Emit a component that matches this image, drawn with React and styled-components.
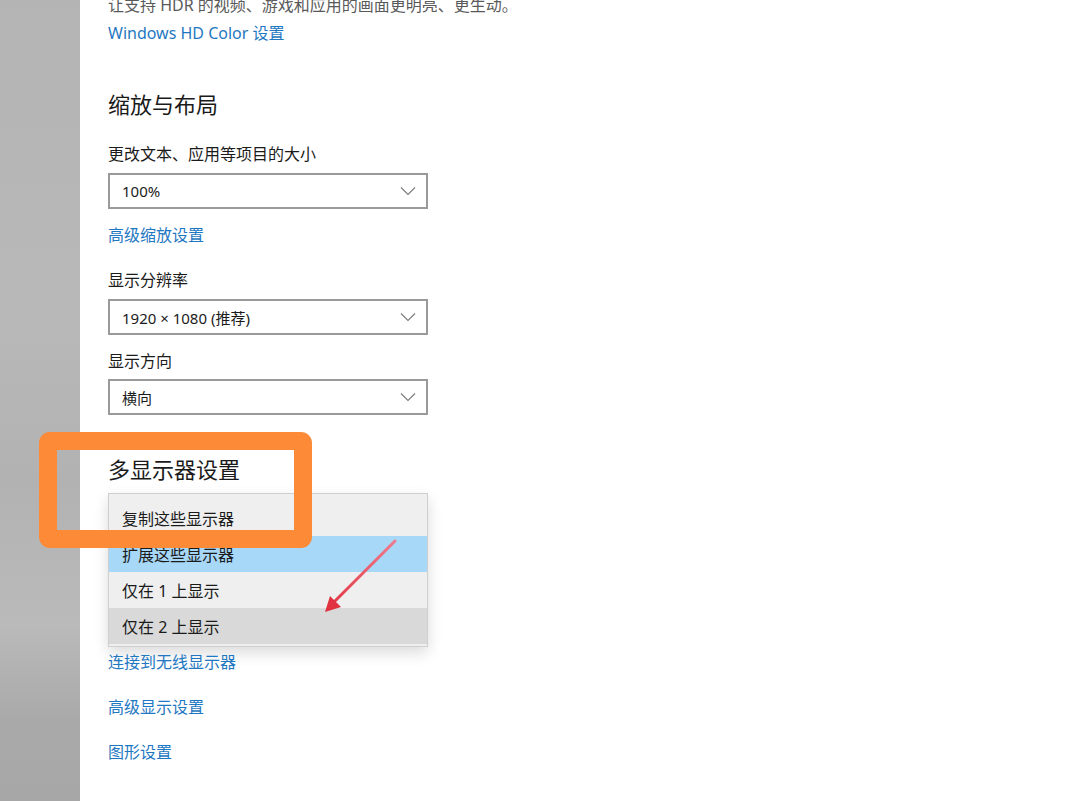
import React from "react";
import styled, { createGlobalStyle } from "styled-components";

const GlobalStyle = createGlobalStyle`
  html, body {
    margin: 0;
    padding: 0;
    background: #ffffff;
    overflow: hidden;
  }
  body {
    font-family: "Noto Sans", "Noto Sans CJK SC", sans-serif;
  }
`;

const Page = styled.div`
  position: relative;
  display: flex;
  width: 1080px;
  height: 801px;
  overflow: hidden;
  background: #fff;
`;

const Sidebar = styled.div`
  width: 80px;
  flex: none;
  background: linear-gradient(
    180deg,
    #b4b4b4 0%,
    #b8b8b8 40%,
    #b2b2b2 60%,
    #bababa 78%,
    #a9a9a9 90%,
    #a7a7a7 100%
  );
`;

const Main = styled.div`
  flex: 1;
  padding-left: 28px;
  display: flex;
  flex-direction: column;
  margin-top: -6px;
`;

const Text = styled.div`
  font-size: 16px;
  line-height: 22px;
  color: ${(p) => (p.muted ? "#5a5a5a" : "#1b1b1b")};
  margin-top: ${(p) => p.mt || 0}px;
  font-family: "Noto Sans", "Noto Sans CJK SC", sans-serif;
`;

const Link = styled.a`
  display: block;
  font-size: 16px;
  line-height: 22px;
  color: #1f78c1;
  text-decoration: none;
  margin-top: ${(p) => p.mt || 0}px;
  font-family: "Noto Sans", "Noto Sans CJK SC", sans-serif;
`;

const Heading = styled.h2`
  margin: ${(p) => p.mt || 0}px 0 0;
  font-size: 22px;
  line-height: 30px;
  font-weight: 400;
  color: #1a1a1a;
  font-family: "Noto Sans", "Noto Sans CJK SC", sans-serif;
`;

const Select = styled.div`
  box-sizing: border-box;
  width: 320px;
  height: 36px;
  margin-top: ${(p) => p.mt || 0}px;
  border: 2px solid #9a9a9a;
  background: #fff;
  display: flex;
  align-items: center;
  justify-content: space-between;
  padding: 0 10px 0 12px;
  font-size: 15px;
  color: #1b1b1b;
  font-family: "Noto Sans", "Noto Sans CJK SC", sans-serif;
`;

const Chevron = () => (
  <svg width="16" height="10" viewBox="0 0 16 10">
    <polyline points="1,1.5 8,8.5 15,1.5" fill="none" stroke="#7a7a7a" strokeWidth="1.1" />
  </svg>
);

const Menu = styled.div`
  box-sizing: border-box;
  width: 320px;
  margin-top: ${(p) => p.mt || 0}px;
  background: #efefef;
  border: 1px solid #cfcfcf;
  padding: 6px 0 2px;
  box-shadow: 0 6px 14px rgba(0, 0, 0, 0.14);
`;

const MenuItem = styled.div`
  height: 36px;
  display: flex;
  align-items: center;
  padding-left: 13px;
  font-size: 16px;
  color: #1b1b1b;
  background: ${(p) =>
    p.selected ? "#a8d8f8" : p.hover ? "#d9d9d9" : "transparent"};
  font-family: "Noto Sans", "Noto Sans CJK SC", sans-serif;
`;

const HighlightBox = styled.div`
  position: absolute;
  left: 39px;
  top: 432px;
  width: 273px;
  height: 116px;
  box-sizing: border-box;
  border: 18px solid #fd8a36;
  border-radius: 11px;
  pointer-events: none;
`;

const ArrowLayer = styled.svg`
  position: absolute;
  left: 0;
  top: 0;
  pointer-events: none;
`;

const Arrow = () => (
  <ArrowLayer width="1080" height="801">
    <defs>
      <linearGradient id="ag" x1="395" y1="541" x2="326" y2="611" gradientUnits="userSpaceOnUse">
        <stop offset="0" stopColor="#f07a8a" />
        <stop offset="1" stopColor="#e03240" />
      </linearGradient>
    </defs>
    <line x1="395" y1="541" x2="333" y2="603" stroke="url(#ag)" strokeWidth="3" strokeLinecap="round" />
    <polygon points="325,612 330,596 341,607" fill="#e03240" />
  </ArrowLayer>
);

export default function App() {
  return (
    <>
      <GlobalStyle />
      <Page>
        <Sidebar />
        <Main>
          <Text muted>让支持 HDR 的视频、游戏和应用的画面更明亮、更生动。</Text>
          <Link mt={6}>Windows HD Color 设置</Link>

          <Heading mt={45}>缩放与布局</Heading>
          <Text mt={24}>更改文本、应用等项目的大小</Text>
          <Select mt={8}>
            <span>100%</span>
            <Chevron />
          </Select>
          <Link mt={15}>高级缩放设置</Link>

          <Text mt={23}>显示分辨率</Text>
          <Select mt={8}>
            <span>1920 × 1080 (推荐)</span>
            <Chevron />
          </Select>
          <Text mt={15}>显示方向</Text>
          <Select mt={7}>
            <span>横向</span>
            <Chevron />
          </Select>

          <Heading mt={39}>多显示器设置</Heading>
          <Menu mt={9}>
            <MenuItem>复制这些显示器</MenuItem>
            <MenuItem selected>扩展这些显示器</MenuItem>
            <MenuItem>仅在 1 上显示</MenuItem>
            <MenuItem hover>仅在 2 上显示</MenuItem>
          </Menu>

          <Link mt={4}>连接到无线显示器</Link>
          <Link mt={23}>高级显示设置</Link>
          <Link mt={23}>图形设置</Link>
        </Main>
        <HighlightBox />
        <Arrow />
      </Page>
    </>
  );
}
